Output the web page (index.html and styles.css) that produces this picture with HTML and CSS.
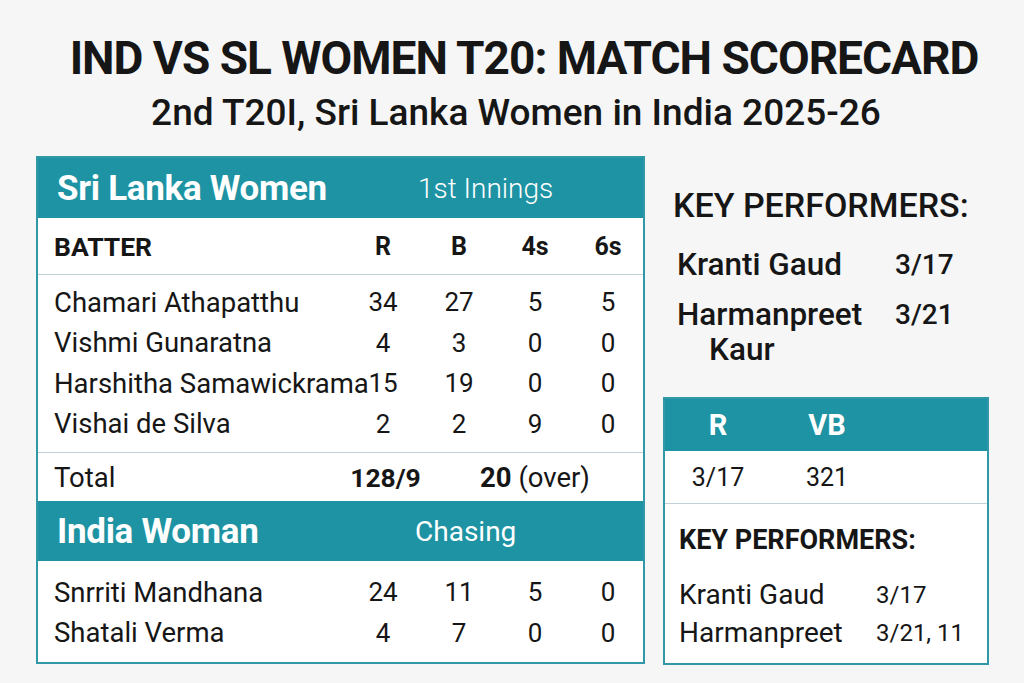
FILE: index.html
```html
<!DOCTYPE html>
<html lang="en">
<head>
<meta charset="utf-8">
<title>IND vs SL Women T20: Match Scorecard</title>
<link rel="stylesheet" href="styles.css">
</head>
<body>
<header class="top">
  <h1 class="title">IND VS SL WOMEN T20: MATCH SCORECARD</h1>
  <p class="sub">2nd T20I, Sri Lanka Women in India 2025-26</p>
</header>
<main class="layout">
  <section class="card innings">
    <div class="inn-head">
      <span class="team">Sri Lanka Women</span>
      <span class="stage">1st Innings</span>
    </div>
    <div class="row cols">
      <span class="name">BATTER</span><span>R</span><span>B</span><span>4s</span><span>6s</span>
    </div>
    <div class="rows">
      <div class="row"><span class="name">Chamari Athapatthu</span><span>34</span><span>27</span><span>5</span><span>5</span></div>
      <div class="row"><span class="name">Vishmi Gunaratna</span><span>4</span><span>3</span><span>0</span><span>0</span></div>
      <div class="row"><span class="name">Harshitha Samawickrama</span><span>15</span><span>19</span><span>0</span><span>0</span></div>
      <div class="row"><span class="name">Vishai de Silva</span><span>2</span><span>2</span><span>9</span><span>0</span></div>
    </div>
    <div class="total">
      <span class="name">Total</span><span class="score">128/9</span><span class="overs"><b>20</b> (over)</span>
    </div>
    <div class="inn-head">
      <span class="team">India Woman</span>
      <span class="stage chase">Chasing</span>
    </div>
    <div class="rows rows-b">
      <div class="row"><span class="name">Snrriti Mandhana</span><span>24</span><span>11</span><span>5</span><span>0</span></div>
      <div class="row"><span class="name">Shatali Verma</span><span>4</span><span>7</span><span>0</span><span>0</span></div>
    </div>
  </section>
  <aside class="side">
    <div class="kp-top">
      <h2 class="kp-title">KEY PERFORMERS:</h2>
      <div class="kp-list">
        <span class="kp-name">Kranti Gaud</span><span class="kp-fig">3/17</span>
        <span class="kp-name">Harmanpreet Kaur</span><span class="kp-fig">3/21</span>
      </div>
    </div>
    <div class="card mini">
      <div class="mini-head"><span>R</span><span>VB</span></div>
      <div class="mini-row"><span>3/17</span><span>321</span></div>
      <div class="mini-kp">
        <h3 class="mini-title">KEY PERFORMERS:</h3>
        <div class="mini-list">
          <span class="mini-name">Kranti Gaud</span><span>3/17</span>
          <span class="mini-name">Harmanpreet</span><span>3/21, 11</span>
        </div>
      </div>
    </div>
  </aside>
</main>
</body>
</html>
```

FILE: styles.css
```css
* { box-sizing: border-box; }
html, body { margin: 0; padding: 0; }
body {
  width: 1024px;
  height: 683px;
  overflow: hidden;
  background: #f6f6f6;
  color: #161616;
  font-family: Roboto, "Noto Sans", "Liberation Sans", sans-serif;
}
.top { text-align: center; padding-top: 30px; }
.title {
  margin: 0;
  padding-left: 24px;
  font-size: 46px;
  line-height: 56px;
  font-weight: 700;
  letter-spacing: -1px;
}
.sub {
  margin: 5px 0 0;
  padding-left: 8px;
  font-size: 37px;
  line-height: 44px;
  font-weight: 500;
}
.layout {
  display: flex;
  align-items: flex-start;
  gap: 18px;
  margin-top: 21px;
  padding-left: 36px;
}
.card {
  background: #fff;
  border: 2px solid #3198a8;
}
.innings { width: 609px; }
.inn-head {
  height: 60px;
  display: grid;
  grid-template-columns: 361px 1fr;
  align-items: center;
  padding-left: 19px;
  background: #1e93a3;
  color: #fff;
}
.team { font-size: 35px; font-weight: 700; letter-spacing: -0.3px; }
.stage { font-size: 28px; font-weight: 300; }
.chase { font-weight: 400; margin-left: -3px; }
.row {
  display: grid;
  grid-template-columns: minmax(0, 1fr) 76px 76px 76px 70px;
  align-items: center;
  padding-left: 16px;
  height: 40.5px;
  font-size: 26px;
}
.row span { text-align: center; white-space: nowrap; }
.row .name { text-align: left; font-size: 27.5px; overflow: visible; }
.cols {
  height: 57px;
  font-weight: 700;
  font-size: 25px;
  border-bottom: 1px solid #bfd0d6;
}
.cols .name { font-size: 26.5px; }
.rows { padding: 7px 0 8px; border-bottom: 1px solid #bfd0d6; }
.rows-b { padding: 11px 0 9px; border-bottom: 0; }
.total {
  display: grid;
  grid-template-columns: 286px 91px 1fr;
  align-items: center;
  padding-left: 16px;
  height: 48px;
  font-size: 27.5px;
}
.score { font-weight: 700; text-align: center; font-size: 26.5px; }
.overs { padding-left: 49px; }
.overs b { font-weight: 700; }

.side { width: 326px; display: flex; flex-direction: column; }
.kp-top { height: 241px; padding: 29px 0 0 10px; }
.kp-title {
  margin: 0;
  font-size: 34px;
  line-height: 40px;
  font-weight: 500;
}
.kp-list {
  display: grid;
  grid-template-columns: 220px 1fr;
  margin-top: 22px;
  font-size: 28px;
  font-weight: 500;
  line-height: 35px;
  row-gap: 15px;
}
.kp-name { font-size: 31.5px; padding-left: 36px; text-indent: -32px; }
.kp-fig { padding-left: 2px; }

.mini { height: 268px; }
.mini-head, .mini-row {
  display: grid;
  grid-template-columns: 106px 112px;
  align-items: center;
  text-align: center;
}
.mini-head {
  height: 52px;
  background: #1e93a3;
  color: #fff;
  font-size: 29px;
  font-weight: 700;
}
.mini-row {
  height: 53px;
  font-size: 25px;
  border-bottom: 1px solid #bfd0d6;
}
.mini-kp { padding: 20px 14px 0; }
.mini-title {
  margin: 0;
  font-size: 27px;
  line-height: 32px;
  font-weight: 700;
}
.mini-list {
  display: grid;
  grid-template-columns: 197px 1fr;
  margin-top: 20px;
  font-size: 24px;
  line-height: 38px;
}
.mini-name { font-size: 28px; }
```
